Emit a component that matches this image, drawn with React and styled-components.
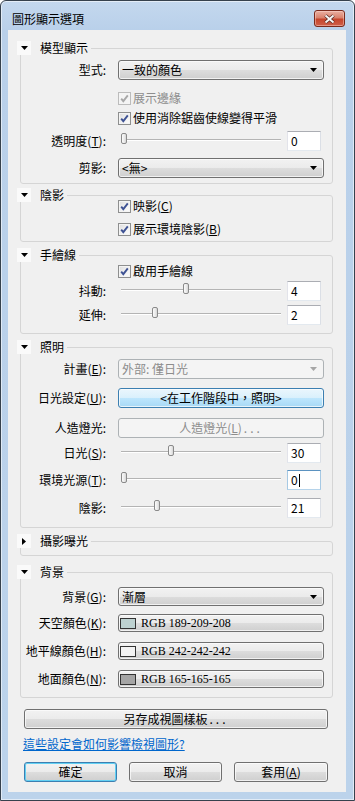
import React from 'react';
import styled, { createGlobalStyle, css } from 'styled-components';

const GlobalStyle = createGlobalStyle`
  html, body {
    margin: 0;
    padding: 0;
    background: #ffffff;
  }
  body {
    font-family: "Noto Sans CJK TC", "Noto Sans", sans-serif;
    font-size: 12px;
    color: #000;
  }
`;

const DownArrow = ({ color = '#000' }) => (
  <svg width="7" height="4" viewBox="0 0 7 4">
    <path d="M0 0h7L3.5 4z" fill={color} />
  </svg>
);

const RightArrow = () => (
  <svg width="4" height="7" viewBox="0 0 4 7">
    <path d="M0 0v7l4-3.5z" fill="#000" />
  </svg>
);

function Group({ title, mt, pb, collapsed, children }) {
  return (
    <Fieldset $mt={mt} $pb={pb}>
      <Legend>
        <Toggle>{collapsed ? <RightArrow /> : <DownArrow />}</Toggle>
        <LegendText>{title}</LegendText>
      </Legend>
      {children}
    </Fieldset>
  );
}

function Check({ checked = true, disabled, children }) {
  return (
    <CheckLabel $disabled={disabled}>
      <CheckBox $disabled={disabled}>
        {checked && (
          <svg width="11" height="11" viewBox="0 0 11 11">
            <path
              d="M2.2 5.6 L4.3 8.2 L8.8 2.4"
              fill="none"
              stroke={disabled ? '#a8a8a8' : '#3f5394'}
              strokeWidth="1.9"
            />
          </svg>
        )}
      </CheckBox>
      <span>{children}</span>
    </CheckLabel>
  );
}

function Slider({ value, max, text, focused }) {
  const left = 3 + (value / max) * 155;
  return (
    <SliderLine>
      <SliderBox>
        <Track />
        <Thumb style={{ left }} />
      </SliderBox>
      <NumBox $focused={focused}>
        {text}
        {focused && <Caret />}
      </NumBox>
    </SliderLine>
  );
}

function Combo({ children, disabled, h }) {
  return (
    <ComboBox $disabled={disabled} $h={h}>
      <span>{children}</span>
      <DownArrow color={disabled ? '#a6a6a6' : '#000'} />
    </ComboBox>
  );
}

function ColorButton({ color, children }) {
  return (
    <SwatchButton>
      <Swatch $color={color} />
      <RgbText>{children}</RgbText>
    </SwatchButton>
  );
}

export default function App() {
  return (
    <>
      <GlobalStyle />
      <Window>
        <TitleBar>
          <Title>圖形顯示選項</Title>
          <CloseButton>
            <svg width="13" height="10" viewBox="0 0 13 10">
              <path d="M2.5 1.5 L10.5 8.5 M10.5 1.5 L2.5 8.5" stroke="#5a2a22" strokeWidth="3.6" />
              <path d="M2.5 1.5 L10.5 8.5 M10.5 1.5 L2.5 8.5" stroke="#f4f4f4" strokeWidth="2" />
            </svg>
          </CloseButton>
        </TitleBar>

        <Client>
          <Group title="模型顯示" mt={11} pb={5}>
            <Row $mt={5}>
              <Label>型式:</Label>
              <Combo>一致的顏色</Combo>
            </Row>
            <Row $mt={8}>
              <span />
              <Check disabled>展示邊緣</Check>
            </Row>
            <Row>
              <span />
              <Check>使用消除鋸齒使線變得平滑</Check>
            </Row>
            <Row $mt={3}>
              <Label>透明度(<u>T</u>):</Label>
              <Slider value={0} max={100} text="0" />
            </Row>
            <Row $mt={7}>
              <Label>剪影:</Label>
              <Combo>&lt;無&gt;</Combo>
            </Row>
          </Group>

          <Group title="陰影" mt={4} pb={5}>
            <Row $mt={-3} $h={14}>
              <span />
              <Check>映影(<u>C</u>)</Check>
            </Row>
            <Row $mt={9} $h={14}>
              <span />
              <Check>展示環境陰影(<u>B</u>)</Check>
            </Row>
          </Group>

          <Group title="手繪線" mt={6} pb={8}>
            <Row $mt={2} $h={14}>
              <span />
              <Check>啟用手繪線</Check>
            </Row>
            <Row $mt={3}>
              <Label>抖動:</Label>
              <Slider value={4} max={10} text="4" />
            </Row>
            <Row $mt={4}>
              <Label>延伸:</Label>
              <Slider value={2} max={10} text="2" />
            </Row>
          </Group>

          <Group title="照明" mt={6} pb={9}>
            <Row $mt={5}>
              <Label>計畫(<u>E</u>):</Label>
              <Combo disabled>外部: 僅日光</Combo>
            </Row>
            <Row $mt={9}>
              <Label>日光設定(<u>U</u>):</Label>
              <Button $variant="hot">&lt;在工作階段中，照明&gt;</Button>
            </Row>
            <Row $mt={10}>
              <Label>人造燈光:</Label>
              <Button $variant="disabled">人造燈光(<u>L</u>)<Dots>...</Dots></Button>
            </Row>
            <Row $mt={5}>
              <Label>日光(<u>S</u>):</Label>
              <Slider value={30} max={100} text="30" />
            </Row>
            <Row $mt={7}>
              <Label>環境光源(<u>T</u>):</Label>
              <Slider value={0} max={100} text="0" focused />
            </Row>
            <Row $mt={8}>
              <Label>陰影:</Label>
              <Slider value={21} max={100} text="21" />
            </Row>
          </Group>

          <Group title="攝影曝光" mt={6} pb={7} collapsed />

          <Group title="背景" mt={9} pb={9}>
            <Row $mt={8} $h={19}>
              <Label>背景(<u>G</u>):</Label>
              <Combo h={19}>漸層</Combo>
            </Row>
            <Row $mt={8} $h={18}>
              <Label>天空顏色(<u>K</u>):</Label>
              <ColorButton color="rgb(189, 209, 208)">RGB 189-209-208</ColorButton>
            </Row>
            <Row $mt={10} $h={18}>
              <Label>地平線顏色(<u>H</u>):</Label>
              <ColorButton color="rgb(242, 242, 242)">RGB 242-242-242</ColorButton>
            </Row>
            <Row $mt={10} $h={18}>
              <Label>地面顏色(<u>N</u>):</Label>
              <ColorButton color="rgb(165, 165, 165)">RGB 165-165-165</ColorButton>
            </Row>
          </Group>

          <Footer>
            <Button $wide>另存成視圖樣板<Dots>...</Dots></Button>
            <HelpLink href="#">這些設定會如何影響檢視圖形?</HelpLink>
            <ButtonBar>
              <Button $variant="default">確定</Button>
              <Button>取消</Button>
              <Button>套用(<u>A</u>)</Button>
            </ButtonBar>
          </Footer>
        </Client>
      </Window>
    </>
  );
}

const Window = styled.div`
  width: 355px;
  height: 801px;
  box-sizing: border-box;
  border: 1px solid #36414d;
  border-radius: 6px 6px 0 0;
  background: linear-gradient(180deg, #c4d8ee 0px, #b9d0ea 29px, #bcd3eb 100%);
  box-shadow: inset 0 0 0 1px rgba(255, 255, 255, 0.55);
  display: flex;
  flex-direction: column;
  overflow: hidden;
`;

const TitleBar = styled.div`
  height: 29px;
  display: flex;
  justify-content: space-between;
  align-items: flex-start;
  padding: 0 9px 0 11px;
`;

const Title = styled.div`
  margin-top: 11px;
  line-height: 14px;
  font-size: 12px;
  color: #000;
`;

const CloseButton = styled.div`
  margin-top: 9px;
  width: 31px;
  height: 17px;
  box-sizing: border-box;
  border: 1px solid #7a2a1c;
  border-radius: 3px;
  background: linear-gradient(180deg, #eab0a2 0%, #d9826d 45%, #c6452c 55%, #d0604a 100%);
  box-shadow: inset 0 0 0 1px rgba(255, 220, 210, 0.45);
  display: flex;
  align-items: center;
  justify-content: center;
`;

const Client = styled.div`
  flex: 1;
  margin: 0 8px 8px 7px;
  background: #f0f0f0;
  display: flex;
  flex-direction: column;
`;

const Fieldset = styled.fieldset`
  margin: ${p => p.$mt}px 13px 0 12px;
  padding: 0 8px ${p => p.$pb}px 0;
  border: 1px solid #d5d5d5;
  border-radius: 3px;
  min-width: 0;
`;

const Legend = styled.legend`
  display: flex;
  align-items: center;
  height: 14px;
  padding: 0 3px 0 0;
  margin-left: -4px;
  line-height: 14px;
`;

const Toggle = styled.span`
  width: 14px;
  height: 14px;
  background: #fafafa;
  display: flex;
  align-items: center;
  justify-content: center;
`;

const LegendText = styled.span`
  margin-left: 9px;
`;

const Row = styled.div`
  display: grid;
  grid-template-columns: 85px 206px;
  column-gap: 12px;
  align-items: center;
  height: ${p => p.$h || 20}px;
  margin-top: ${p => p.$mt || 0}px;
`;

const Label = styled.span`
  text-align: right;
  white-space: nowrap;
  line-height: 14px;
`;

const CheckLabel = styled.label`
  display: flex;
  align-items: center;
  gap: 2px;
  line-height: 14px;
  color: ${p => (p.$disabled ? '#8d8d8d' : '#000')};
`;

const CheckBox = styled.span`
  width: 13px;
  height: 13px;
  box-sizing: border-box;
  border: 1px solid ${p => (p.$disabled ? '#bcbcbc' : '#8e8f8f')};
  background: ${p =>
    p.$disabled
      ? '#f4f4f4'
      : 'linear-gradient(135deg, #dcdcdc 0%, #f0f0f0 50%, #fdfdfd 100%)'};
  box-shadow: inset 0 0 0 1px #f4f4f4;
  display: flex;
  align-items: center;
  justify-content: center;
`;

const SliderLine = styled.div`
  display: flex;
  align-items: center;
  gap: 3px;
`;

const SliderBox = styled.div`
  position: relative;
  width: 166px;
  height: 20px;
  box-sizing: border-box;
  padding: 0 3px 3px;
  display: flex;
  align-items: center;
`;

const Track = styled.div`
  flex: 1;
  height: 0;
  border-top: 1px solid #b4b4b4;
  border-bottom: 1px solid #ffffff;
`;

const Thumb = styled.div`
  position: absolute;
  top: 2px;
  width: 6px;
  height: 11px;
  box-sizing: border-box;
  border: 1px solid #8a8a8a;
  border-radius: 2px;
  background: linear-gradient(90deg, #fbfbfb 0%, #e9e9e9 60%, #d6d6d6 100%);
`;

const NumBox = styled.div`
  width: 34px;
  height: 20px;
  box-sizing: border-box;
  border: 1px solid;
  border-color: ${p =>
    p.$focused ? '#5b92c0 #a6c9e4 #b5d3ea #a6c9e4' : '#abadb3 #dbdfe6 #e3e9ef #e2e3ea'};
  background: #fff;
  padding-left: 3px;
  line-height: 18px;
  display: flex;
  align-items: center;
`;

const Caret = styled.span`
  width: 1px;
  height: 13px;
  background: #000;
  margin-left: 1px;
`;

const Dots = styled.span`
  letter-spacing: 3px;
  margin-left: 2px;
`;

const buttonLook = css`
  box-sizing: border-box;
  border: 1px solid #707070;
  border-radius: 3px;
  background: linear-gradient(180deg, #f2f2f2 0%, #ebebeb 50%, #dddddd 50%, #cfcfcf 100%);
  box-shadow: inset 0 0 0 1px rgba(252, 252, 252, 0.75);
  font-family: inherit;
  font-size: 12px;
  color: #000;
`;

const Button = styled.button`
  ${buttonLook};
  height: 20px;
  padding: 0;
  line-height: 16px;
  width: ${p => (p.$wide ? '304px' : 'auto')};
  ${p =>
    p.$variant === 'hot' &&
    css`
      border-color: #3c7fb1;
      background: linear-gradient(180deg, #eaf6fd 0%, #d9f0fc 50%, #bee6fd 50%, #a7d9f5 100%);
    `}
  ${p =>
    p.$variant === 'default' &&
    css`
      border-color: #3c7fb1;
      box-shadow: inset 0 0 0 1px #62d0f3;
    `}
  ${p =>
    p.$variant === 'disabled' &&
    css`
      border-color: #adb2b5;
      background: #f4f4f4;
      box-shadow: none;
      color: #8d8d8d;
    `}
`;

const ComboBox = styled.div`
  ${buttonLook};
  height: ${p => p.$h || 20}px;
  display: flex;
  align-items: center;
  justify-content: space-between;
  padding: 0 6px 0 3px;
  line-height: 14px;
  ${p =>
    p.$disabled &&
    css`
      border-color: #adb2b5;
      background: #f4f4f4;
      box-shadow: none;
      color: #8d8d8d;
    `}
`;

const SwatchButton = styled.div`
  ${buttonLook};
  height: 18px;
  display: flex;
  align-items: center;
  padding-left: 1px;
`;

const Swatch = styled.span`
  width: 16px;
  height: 11px;
  box-sizing: border-box;
  border: 1px solid #333;
  background: ${p => p.$color};
`;

const RgbText = styled.span`
  margin-left: 5px;
  font-family: "Liberation Serif", serif;
  font-size: 12px;
  line-height: 14px;
`;

const Footer = styled.div`
  display: flex;
  flex-direction: column;
  padding: 0 18px 0 16px;
  margin-top: 11px;
`;

const HelpLink = styled.a`
  margin: 8px 0 0 -1px;
  line-height: 14px;
  color: #0066cc;
  text-decoration: underline;
  align-self: flex-start;
`;

const ButtonBar = styled.div`
  display: grid;
  grid-template-columns: 93px 93px 94px;
  column-gap: 12px;
  margin-top: 11px;
`;
